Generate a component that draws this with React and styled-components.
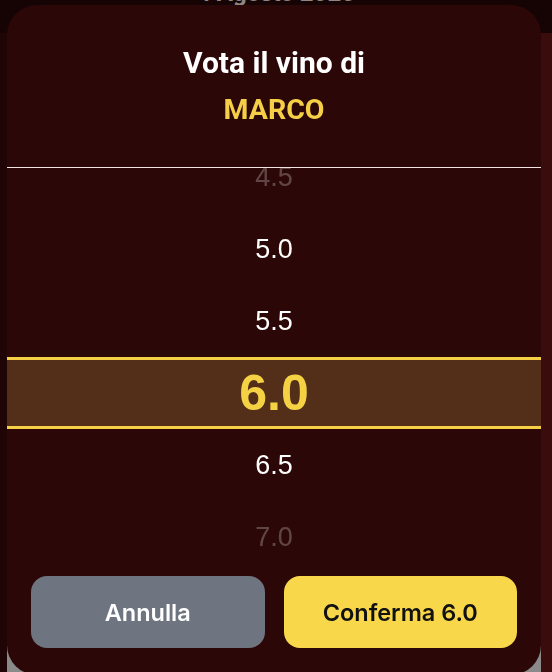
import React from 'react';
import styled, { createGlobalStyle } from 'styled-components';

const GlobalStyle = createGlobalStyle`
  html, body {
    margin: 0;
    padding: 0;
    background: #1f0505;
    overflow: hidden;
  }
  * {
    box-sizing: border-box;
  }
`;

const Backdrop = styled.div`
  width: 552px;
  height: 672px;
  display: flex;
  flex-direction: column;
`;

const Header = styled.div`
  height: 33px;
  background: #160303;
  display: flex;
  justify-content: center;
  overflow: hidden;
`;

const DateLabel = styled.div`
  margin-top: -21px;
  font-family: Roboto, "Liberation Sans", sans-serif;
  font-weight: 700;
  font-size: 24px;
  line-height: 28px;
  color: #8f8585;
`;

const Body = styled.div`
  flex: 1;
  display: grid;
  grid-template-columns: 7px 1fr 11px;
`;

const SideStrip = styled.div`
  background: ${(p) => p.$color};
`;

const Feed = styled.div`
  display: flex;
  flex-direction: column;
  justify-content: flex-end;
  background: #2a0606;
`;

const FeedCard = styled.div`
  height: 26px;
  background: linear-gradient(to right, #8a8a8a 20px, #3a3a3a 20px, #3a3a3a 21px, #8a8a8a 21px);
`;

const Sheet = styled.div`
  position: fixed;
  left: 7px;
  top: 5px;
  width: 534px;
  height: 670px;
  background: #2c0707;
  border-radius: 30px;
  display: flex;
  flex-direction: column;
  padding-top: 41px;
  overflow: hidden;
`;

const Title = styled.h2`
  margin: 0;
  text-align: center;
  font-family: Roboto, "Liberation Sans", sans-serif;
  font-weight: 700;
  font-size: 30px;
  line-height: 34px;
  color: #ffffff;
`;

const Name = styled.div`
  margin-top: 13px;
  text-align: center;
  font-family: Roboto, "Liberation Sans", sans-serif;
  font-weight: 700;
  font-size: 28.5px;
  line-height: 34px;
  color: #f5cf45;
`;

const Divider = styled.div`
  margin-top: 40px;
  height: 1px;
  background: #f3e3e3;
`;

const Wheel = styled.div`
  height: 388px;
  overflow: hidden;
`;

const WheelList = styled.div`
  margin-top: -27px;
  display: flex;
  flex-direction: column;
`;

const WheelRow = styled.div`
  height: 72px;
  display: flex;
  align-items: center;
  justify-content: center;
  font-family: "Liberation Sans", Arial, sans-serif;
  font-size: ${(p) => (p.$selected ? '50px' : '27px')};
  font-weight: ${(p) => (p.$selected ? 700 : 400)};
  color: ${(p) => (p.$selected ? '#f5d244' : '#ffffff')};
  background: ${(p) => (p.$selected ? '#532f19' : 'transparent')};
  border-top: 3px solid ${(p) => (p.$selected ? '#f5cf45' : 'transparent')};
  border-bottom: 3px solid ${(p) => (p.$selected ? '#f5cf45' : 'transparent')};
  opacity: ${(p) => p.$opacity};
`;

const Actions = styled.div`
  margin-top: 20px;
  padding: 0 24px;
  display: grid;
  grid-template-columns: 1fr 1fr;
  gap: 19px;
`;

const ActionButton = styled.button`
  height: 72px;
  border: none;
  border-radius: 16px;
  font-family: Inter, "Liberation Sans", sans-serif;
  font-weight: 600;
  font-size: 23.5px;
  background: ${(p) => (p.$primary ? '#f8d84a' : '#6e7480')};
  color: ${(p) => (p.$primary ? '#111111' : '#ffffff')};
  cursor: pointer;
`;

const values = ['4.5', '5.0', '5.5', '6.0', '6.5', '7.0', '7.5'];
const selected = '6.0';
const ROW = 72;
const OFFSET = -27;
const WHEEL_H = 388;

// rows whose centre sits close to the wheel's edges are dimmed
const rowOpacity = (i) => {
  const centre = OFFSET + i * ROW + ROW / 2;
  return centre < 40 || centre > WHEEL_H - 40 ? 0.25 : 1;
};

export default function App() {
  return (
    <>
      <GlobalStyle />
      <Backdrop>
        <Header>
          <DateLabel>4 Agosto 2025</DateLabel>
        </Header>
        <Body>
          <SideStrip $color="#1f0505" />
          <Feed>
            <FeedCard />
          </Feed>
          <SideStrip $color="#3b0c0c" />
        </Body>
      </Backdrop>
      <Sheet>
        <Title>Vota il vino di</Title>
        <Name>MARCO</Name>
        <Divider />
        <Wheel>
          <WheelList>
            {values.map((v, i) => (
              <WheelRow key={v} $selected={v === selected} $opacity={rowOpacity(i)}>
                {v}
              </WheelRow>
            ))}
          </WheelList>
        </Wheel>
        <Actions>
          <ActionButton>Annulla</ActionButton>
          <ActionButton $primary>Conferma {selected}</ActionButton>
        </Actions>
      </Sheet>
    </>
  );
}
